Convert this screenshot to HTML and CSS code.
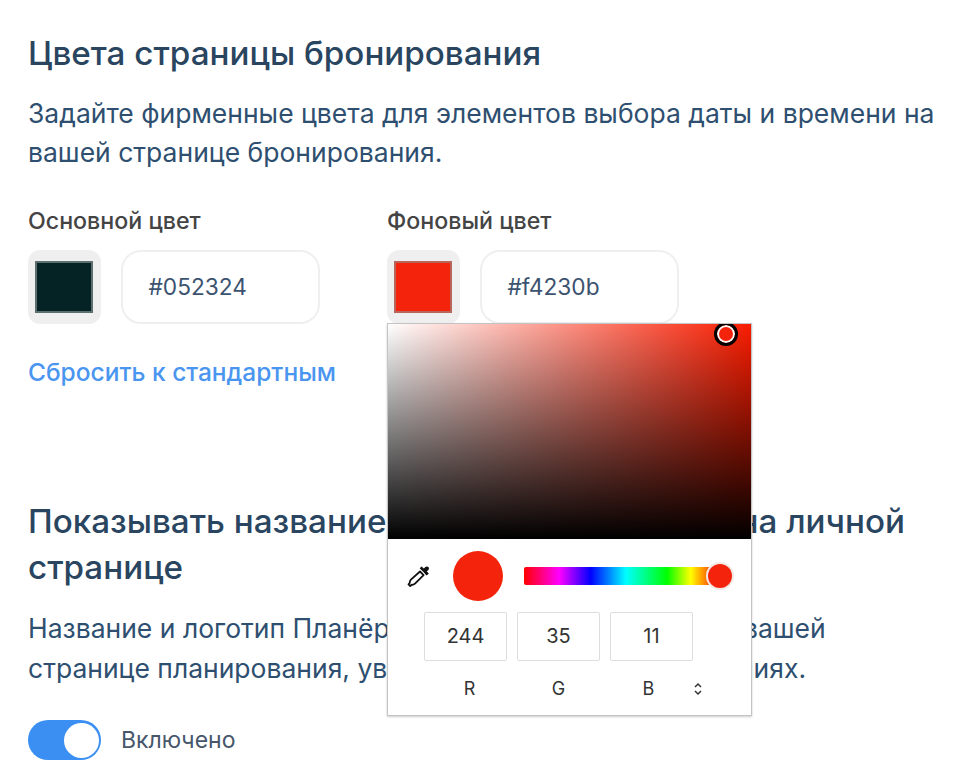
FILE: index.html
```html
<!DOCTYPE html>
<html lang="ru">
<head>
    <meta charset="UTF-8">
    <link rel="stylesheet" href="styles.css">
    <title>Цвета страницы бронирования</title>
</head>
<body>
    <section class="colors">
        <h2 class="title">Цвета страницы бронирования</h2>
        <p class="text">Задайте фирменные цвета для элементов выбора даты и времени на вашей странице бронирования.</p>

        <div class="fields">
            <div class="field">
                <div class="field__label">Основной цвет</div>
                <div class="field__row">
                    <div class="swatch"><span class="swatch__fill swatch__fill--dark"></span></div>
                    <div class="hex">#052324</div>
                </div>
            </div>
            <div class="field">
                <div class="field__label">Фоновый цвет</div>
                <div class="field__row">
                    <div class="swatch"><span class="swatch__fill swatch__fill--red"></span></div>
                    <div class="hex">#f4230b</div>
                </div>

                <div class="picker">
                    <div class="picker__area">
                        <span class="picker__cursor"></span>
                    </div>
                    <div class="picker__controls">
                        <svg class="picker__dropper" width="26" height="26" viewBox="0 0 26 26">
                            <path d="M15.5 3.5l2.2 2.2 1.6-1.6c1-1 2.4-.9 3.1-.1.8.8.8 2.1-.1 3l-1.6 1.6 2 2-2 2-1.5-1.5" fill="#111"/>
                            <path d="M15.5 3.5l7 7-2 1.6-6.8-6.8z" fill="#111"/>
                            <path d="M14 8.5l3.6 3.6-8.6 8.6c-.6.6-1.2.9-2 1l-1.6.3-1.2 1.1-1.7-1.7 1.1-1.2.3-1.6c.1-.8.4-1.4 1-2z" fill="#fff" stroke="#111" stroke-width="1.8" stroke-linejoin="round"/>
                        </svg>
                        <span class="picker__preview"></span>
                        <div class="picker__hue"><span class="picker__thumb"></span></div>
                    </div>
                    <div class="picker__inputs">
                        <div class="channel">
                            <div class="channel__box">244</div>
                            <div class="channel__name channel__name--r">R</div>
                        </div>
                        <div class="channel">
                            <div class="channel__box">35</div>
                            <div class="channel__name">G</div>
                        </div>
                        <div class="channel">
                            <div class="channel__box">11</div>
                            <div class="channel__name channel__name--b">B</div>
                        </div>
                        <svg class="picker__switch" width="10" height="14" viewBox="0 0 10 14">
                            <path d="M2 5l3-3 3 3M2 9l3 3 3-3" fill="none" stroke="#333" stroke-width="1.5"/>
                        </svg>
                    </div>
                </div>
            </div>
        </div>

        <a class="reset" href="#">Сбросить к стандартным</a>
    </section>

    <section class="branding">
        <h2 class="title">Показывать название и логотип&thinsp; Планёрки на личной странице</h2>
        <p class="text text--small">Название и логотип Планёрки будут&thinsp; отображаться на вашей странице планирования, уведомлениях и подтверждениях.</p>
        <div class="toggle-row">
            <span class="toggle"><span class="toggle__knob"></span></span>
            <span class="toggle-row__label">Включено</span>
        </div>
    </section>
</body>
</html>
```

FILE: styles.css
```css
*{box-sizing: border-box;}

html, body{height: 100%;}
body{margin: 0; padding: 0 28px; background: #fff; font-family: Inter, "Noto Sans", sans-serif; color: #2c4a6b; overflow: hidden;}

.colors{padding-top: 30px;}
.title{margin: 0; font-size: 33.2px; line-height: 46px; font-weight: 500; color: #2a4560;}
.text{margin: 18px 0 0; width: 915px; font-size: 26.5px; line-height: 39px; color: #2e4f70;}
.text--small{width: 830px; line-height: 40px;}

.fields{display: flex; gap: 67px; margin-top: 35px;}
.field{position: relative; width: 292px;}
.field__label{font-size: 23.2px; line-height: 28px; font-weight: 500; color: #444;}
.field__row{display: flex; gap: 20px; margin-top: 15px;}

.swatch{width: 74px; height: 74px; padding: 11px 8px 11px 7px; background: #efefef; border-radius: 12px;}
.swatch__fill{display: block; width: 100%; height: 100%; border: 2px solid #777;}
.swatch__fill--dark{background: #052324; border-color: #5e6f6f;}
.swatch__fill--red{background: #f4230b; border-color: #b8665c;}

.hex{width: 200px; height: 74px; padding-left: 25px; border: 2px solid #efefef; border-radius: 20px; font-size: 22.7px; line-height: 70px; color: #3c5370;}

.reset{display: block; margin-top: 30px; font-size: 24.5px; line-height: 36px; font-weight: 500; color: #4a95ef; text-decoration: none;}

.picker{position: absolute; top: 116px; left: 0; width: 365px; height: 393px; background: #fff; border: 1px solid #c4c4c4; box-shadow: 0 1px 2px rgba(0,0,0,.2); z-index: 2;}
.picker__area{position: relative; height: 215px; overflow: hidden; background: linear-gradient(to top, #000, rgba(0,0,0,0)), linear-gradient(to right, #fff, #f91c00);}
.picker__cursor{position: absolute; top: -2px; right: 13px; width: 24px; height: 24px; border: 3px solid #000; border-radius: 50%; background: #f4230b; box-shadow: inset 0 0 0 2px #fff;}

.picker__controls{display: flex; align-items: center; height: 73px; padding-left: 18px;}
.picker__dropper{flex: none;}
.picker__preview{flex: none; width: 50px; height: 50px; margin-left: 21px; border-radius: 50%; background: #f4230b;}
.picker__hue{position: relative; width: 196px; height: 18px; margin-left: 21px; border-radius: 2px; background: linear-gradient(to right, #f00, #f0f 18%, #00f 34%, #0ff 52%, #0f0 73%, #ff0 85%, #f00);}
.picker__thumb{position: absolute; top: -3px; right: -12px; width: 24px; height: 24px; border-radius: 50%; background: #f4230b; box-shadow: 0 0 0 2px #f3e9e7;}

.picker__inputs{display: flex; gap: 10px; padding-left: 36px;}
.channel{width: 83px; text-align: center;}
.channel__box{height: 49px; border: 1px solid #ddd; border-radius: 2px; font-size: 20px; line-height: 47px; color: #333;}
.channel__name{margin-top: 17px; font-size: 18px; line-height: 22px; color: #333;}
.channel__name--r{padding-left: 8px;}
.channel__name--b{padding-right: 6px;}
.picker__switch{margin: 70px 0 0 -10px;}

.branding{margin-top: 108px;}

.toggle-row{display: flex; align-items: center; gap: 20px; margin-top: 32px;}
.toggle{display: flex; justify-content: flex-end; align-items: center; width: 73px; height: 40px; padding: 2px; background: #3b8ff3; border-radius: 20px;}
.toggle__knob{width: 35px; height: 35px; background: #fff; border-radius: 50%;}
.toggle-row__label{font-size: 23px; color: #46566b;}
```
